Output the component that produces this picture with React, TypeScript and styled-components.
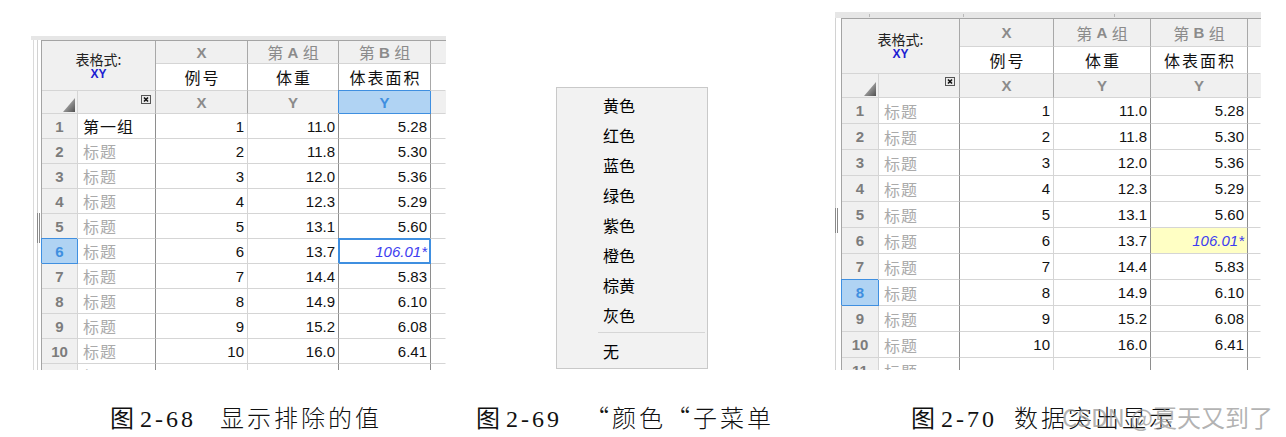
import React from "react";
import styled, { createGlobalStyle, css } from "styled-components";

const GlobalStyle = createGlobalStyle`
  html, body { margin: 0; padding: 0; background: #ffffff; }
  body { font-family: "Liberation Sans", "Noto Sans CJK SC", sans-serif; }
`;

const LINE_LIGHT = "#d5d5d5";
const LINE_DARK = "#8e8e8e";
const LINE_HEAD = "#a8a8a8";
const HEAD_BG = "#f0f0f0";
const BLUE = "#3f8fe0";
const SEL_BG = "#b0d3f3";
const HEAD_TEXT = "#8b8b8b";
const EXCL_TEXT = "#3d3df0";

const Page = styled.div`
  position: relative;
  width: 1286px;
  height: 437px;
  display: flex;
  overflow: hidden;
  background: #ffffff;
`;

const Figure = styled.section<{ $left: number; $width: number }>`
  flex: none;
  display: flex;
  flex-direction: column;
  margin-left: ${(p) => p.$left}px;
  width: ${(p) => p.$width}px;
`;

const Stage = styled.div<{ $top: number; $inset?: number }>`
  box-sizing: border-box;
  height: 372px;
  padding-top: ${(p) => p.$top}px;
  padding-left: ${(p) => p.$inset ?? 0}px;
  display: flex;
  flex-direction: column;
  align-items: flex-start;
`;

/* ---------- caption ---------- */
const Caption = styled.div<{ $indent: number; $gap: number }>`
  display: flex;
  align-items: baseline;
  gap: ${(p) => p.$gap}px;
  margin-top: 30px;
  margin-left: ${(p) => p.$indent}px;
  height: 30px;
  white-space: nowrap;
  color: #111;
`;

const CapLabel = styled.span`
  font-family: "Liberation Serif", "Noto Sans CJK SC", serif;
  font-size: 24px;
  line-height: 30px;
  letter-spacing: 3px;
  word-spacing: -6px;
`;

const CapTitle = styled.span`
  font-family: "Noto Sans CJK SC", sans-serif;
  font-weight: 300;
  font-size: 24px;
  line-height: 30px;
  letter-spacing: 3px;
`;

const Watermark = styled.div`
  position: absolute;
  left: 1062px;
  top: 402px;
  font-family: "Noto Sans CJK SC", sans-serif;
  font-size: 24px;
  line-height: 30px;
  color: rgba(150, 150, 150, 0.72);
  white-space: nowrap;
  pointer-events: none;
`;

/* ---------- sheet ---------- */
const Sheet = styled.div<{ $h: number }>`
  display: flex;
  flex-direction: column;
  height: ${(p) => p.$h}px;
  overflow: hidden;
`;

const Strip = styled.div<{ $h: number; $ticks: string }>`
  flex: none;
  height: ${(p) => p.$h}px;
  background: ${(p) => p.$ticks}#e6e6e6;
`;

const SheetBody = styled.div`
  display: flex;
  flex: 1;
  min-height: 0;
`;

const Gutter = styled.div<{ $w: number; $pad: number; $gap: number }>`
  flex: none;
  box-sizing: border-box;
  width: ${(p) => p.$w}px;
  padding-left: ${(p) => p.$pad}px;
  display: flex;
  gap: ${(p) => p.$gap}px;
`;

const Rail = styled.div`
  width: 1px;
  background: #dadada;
`;

const Track = styled.div`
  width: 3px;
  border-left: 1px solid #d2d2d2;
  display: flex;
  flex-direction: column;
`;

const Grip = styled.div<{ $top: number; $h: number }>`
  margin-left: -1px;
  margin-top: ${(p) => p.$top}px;
  width: 1px;
  height: ${(p) => p.$h}px;
  border-left: 1px solid #8a8a8a;
  border-right: 1px solid #8a8a8a;
`;

const Grid = styled.div<{ $cols: string; $rows: string; $rowH: number }>`
  flex: none;
  display: grid;
  grid-template-columns: ${(p) => p.$cols};
  grid-template-rows: ${(p) => p.$rows};
  grid-auto-rows: ${(p) => p.$rowH}px;
  align-content: start;
  border-top: 1px solid #a4a4a4;
  border-left: 1px solid #a4a4a4;
  font-family: "Liberation Sans", "Noto Sans CJK SC", sans-serif;
`;

type Lines = { $rc: string; $bc?: string };

const cellBase = css<Lines>`
  box-sizing: border-box;
  min-width: 0;
  overflow: hidden;
  white-space: nowrap;
  display: flex;
  align-items: center;
  border-right: 1px solid ${(p) => p.$rc};
  border-bottom: 1px solid ${(p) => p.$bc ?? LINE_LIGHT};
`;

const selectedFrame = css`
  background: ${SEL_BG};
  color: ${BLUE};
  border-right-color: ${BLUE};
  border-bottom-color: ${BLUE};
  box-shadow: -1px -1px 0 0 ${BLUE};
`;

const Corner = styled.div<Lines>`
  ${cellBase};
  grid-column: 1 / span 2;
  grid-row: 1 / span 2;
  flex-direction: column;
  justify-content: center;
  background: ${HEAD_BG};
  padding-bottom: 2px;
`;

const CornerLabel = styled.span`
  font-family: "Noto Sans CJK SC", sans-serif;
  font-size: 14px;
  line-height: 18px;
  color: #222;
`;

const CornerKind = styled.span`
  font-family: "Liberation Sans", sans-serif;
  font-weight: 700;
  font-size: 12px;
  line-height: 12px;
  color: #1c1cd2;
`;

const GroupCell = styled.div<Lines>`
  ${cellBase};
  justify-content: center;
  background: ${HEAD_BG};
  color: ${HEAD_TEXT};
  font-size: 16px;
  white-space: pre;
`;

const Letter = styled.span`
  font-family: "Liberation Sans", sans-serif;
  font-weight: 700;
  font-size: 15px;
`;

const NameCell = styled.div<Lines>`
  ${cellBase};
  justify-content: center;
  background: #ffffff;
  color: #111;
  font-family: "Noto Sans CJK SC", sans-serif;
  font-size: 16px;
  letter-spacing: 2px;
  padding-left: 2px;
`;

const KindCell = styled.div<Lines & { $active?: boolean }>`
  ${cellBase};
  justify-content: center;
  background: ${HEAD_BG};
  color: ${HEAD_TEXT};
  font-weight: 700;
  font-size: 15px;
  ${(p) => p.$active && selectedFrame};
`;

const SortCell = styled.div<Lines>`
  ${cellBase};
  background: ${HEAD_BG};
  justify-content: flex-end;
  align-items: flex-end;
  padding: 0 2px 1px 0;
`;

const ClearCell = styled.div<Lines & { $pad: number }>`
  ${cellBase};
  background: ${HEAD_BG};
  justify-content: flex-end;
  align-items: flex-start;
  padding: ${(p) => p.$pad}px 4px 0 0;
`;

const RowNum = styled.div<Lines & { $active?: boolean }>`
  ${cellBase};
  justify-content: center;
  background: ${HEAD_BG};
  color: #7c7c7c;
  font-weight: 700;
  font-size: 15px;
  ${(p) => p.$active && selectedFrame};
`;

const TitleCell = styled.div<Lines & { $muted?: boolean }>`
  ${cellBase};
  background: #ffffff;
  padding-left: 5px;
  font-family: "Noto Sans CJK SC", sans-serif;
  font-size: 16px;
  letter-spacing: 1px;
  color: ${(p) => (p.$muted ? "#aaaaaa" : "#111111")};
`;

const ValueCell = styled.div<Lines & { $mark?: "outline" | "fill" }>`
  ${cellBase};
  justify-content: flex-end;
  padding-right: 3px;
  background: #ffffff;
  color: #111;
  font-size: 15px;
  ${(p) =>
    p.$mark &&
    css`
      font-style: italic;
      color: ${EXCL_TEXT};
    `};
  ${(p) =>
    p.$mark === "outline" &&
    css`
      border-right-color: ${BLUE};
      border-bottom-color: ${BLUE};
      box-shadow: -1px -1px 0 0 ${BLUE}, inset 1px 1px 0 0 ${BLUE},
        inset -1px -1px 0 0 ${BLUE};
    `};
  ${(p) =>
    p.$mark === "fill" &&
    css`
      background: #ffffc4;
    `};
`;

/* ---------- small drawings ---------- */
function SortMark() {
  return (
    <svg width="12" height="14" viewBox="0 0 12 14">
      <defs>
        <linearGradient id="sortgrad" x1="0" y1="0" x2="1" y2="1">
          <stop offset="0" stopColor="#d8d8d8" />
          <stop offset="1" stopColor="#505050" />
        </linearGradient>
      </defs>
      <polygon points="12,0 12,14 0,14" fill="url(#sortgrad)" />
    </svg>
  );
}

function ClearBox() {
  return (
    <svg width="10" height="9" viewBox="0 0 10 9">
      <rect x="0.5" y="0.5" width="9" height="8" fill="#ececec" stroke="#555" />
      <path d="M3 2.5 L7 6.5 M7 2.5 L3 6.5" stroke="#111" strokeWidth="1.6" />
    </svg>
  );
}

/* ---------- data ---------- */
const A_VALUES = ["11.0", "11.8", "12.0", "12.3", "13.1", "13.7", "14.4", "14.9", "15.2", "16.0", ""];
const B_VALUES = ["5.28", "5.30", "5.36", "5.29", "5.60", "106.01*", "5.83", "6.10", "6.08", "6.41", ""];
const BODY_RIGHT = [LINE_LIGHT, LINE_DARK, LINE_LIGHT, LINE_DARK, LINE_DARK, "transparent"];

type SheetSpec = {
  cols: number[];
  head: [number, number, number];
  rowH: number;
  height: number;
  stripH: number;
  ticks: number[];
  gutterW: number;
  gutterPad: number;
  gutterGap: number;
  rail: boolean;
  gripTop: number;
  gripH: number;
  firstTitle?: string;
  selectedRow: number;
  selectY: boolean;
  mark: "outline" | "fill";
  clearPad: number;
};

const LEFT: SheetSpec = {
  cols: [36, 78, 92, 91, 92, 15],
  head: [23, 27, 23],
  rowH: 25,
  height: 334,
  stripH: 4,
  ticks: [],
  gutterW: 10,
  gutterPad: 2,
  gutterGap: 3,
  rail: true,
  gripTop: 173,
  gripH: 30,
  firstTitle: "第一组",
  selectedRow: 6,
  selectY: true,
  mark: "outline",
  clearPad: 4,
};

const RIGHT: SheetSpec = {
  cols: [37, 81, 94, 97, 97, 13],
  head: [28, 27, 24],
  rowH: 26,
  height: 358,
  stripH: 6,
  ticks: [34, 128, 279],
  gutterW: 6,
  gutterPad: 0,
  gutterGap: 0,
  rail: false,
  gripTop: 190,
  gripH: 25,
  selectedRow: 8,
  selectY: false,
  mark: "fill",
  clearPad: 3,
};

function tickBackground(ticks: number[]) {
  return ticks
    .map((x) => `linear-gradient(#b9b9b9, #b9b9b9) ${x}px 2px / 1px 3px no-repeat, `)
    .join("");
}

function DataSheet({ spec }: { spec: SheetSpec }) {
  const rows = Array.from({ length: 11 }, (_, i) => i);
  return (
    <Sheet $h={spec.height}>
      <Strip $h={spec.stripH} $ticks={tickBackground(spec.ticks)} />
      <SheetBody>
        <Gutter $w={spec.gutterW} $pad={spec.gutterPad} $gap={spec.gutterGap}>
          {spec.rail && <Rail />}
          <Track>
            <Grip $top={spec.gripTop} $h={spec.gripH} />
          </Track>
        </Gutter>
        <Grid
          $cols={spec.cols.map((c) => `${c}px`).join(" ")}
          $rows={spec.head.map((h) => `${h}px`).join(" ")}
          $rowH={spec.rowH}
        >
          <Corner $rc={LINE_HEAD}>
            <CornerLabel>表格式:</CornerLabel>
            <CornerKind>XY</CornerKind>
          </Corner>
          <GroupCell $rc={LINE_HEAD}>
            <Letter>X</Letter>
          </GroupCell>
          <GroupCell $rc={LINE_HEAD}>
            {"第 "}
            <Letter>A</Letter>
            {" 组"}
          </GroupCell>
          <GroupCell $rc={LINE_HEAD}>
            {"第 "}
            <Letter>B</Letter>
            {" 组"}
          </GroupCell>
          <GroupCell $rc="transparent" />

          <NameCell $rc={LINE_HEAD}>例号</NameCell>
          <NameCell $rc={LINE_HEAD}>体重</NameCell>
          <NameCell $rc={LINE_HEAD}>体表面积</NameCell>
          <NameCell $rc="transparent" />

          <SortCell $rc={LINE_LIGHT}>
            <SortMark />
          </SortCell>
          <ClearCell $rc={LINE_HEAD} $pad={spec.clearPad}>
            <ClearBox />
          </ClearCell>
          <KindCell $rc={LINE_HEAD}>X</KindCell>
          <KindCell $rc={LINE_HEAD}>Y</KindCell>
          <KindCell $rc={LINE_HEAD} $active={spec.selectY}>
            Y
          </KindCell>
          <KindCell $rc="transparent" />

          {rows.map((i) => (
            <React.Fragment key={i}>
              <RowNum $rc={BODY_RIGHT[0]} $active={i + 1 === spec.selectedRow}>
                {i + 1}
              </RowNum>
              <TitleCell $rc={BODY_RIGHT[1]} $muted={!(i === 0 && spec.firstTitle)}>
                {i === 0 && spec.firstTitle ? spec.firstTitle : "标题"}
              </TitleCell>
              <ValueCell $rc={BODY_RIGHT[2]}>{i < 10 ? i + 1 : ""}</ValueCell>
              <ValueCell $rc={BODY_RIGHT[3]}>{A_VALUES[i]}</ValueCell>
              <ValueCell $rc={BODY_RIGHT[4]} $mark={i === 5 ? spec.mark : undefined}>
                {B_VALUES[i]}
              </ValueCell>
              <ValueCell $rc={BODY_RIGHT[5]} />
            </React.Fragment>
          ))}
        </Grid>
      </SheetBody>
    </Sheet>
  );
}

/* ---------- menu ---------- */
const Menu = styled.ul`
  list-style: none;
  margin: 0;
  padding: 2px 0;
  width: 152px;
  box-sizing: border-box;
  border: 1px solid #c9c9c9;
  background: #f2f2f2;
  font-family: "Noto Sans CJK SC", sans-serif;
  font-size: 16px;
  color: #000;
`;

const MenuItem = styled.li`
  height: 30px;
  line-height: 30px;
  padding-left: 46px;
`;

const MenuSeparator = styled.li`
  height: 1px;
  margin: 2px 2px 3px 41px;
  background: #d6d6d6;
`;

const COLORS = ["黄色", "红色", "蓝色", "绿色", "紫色", "橙色", "棕黄", "灰色"];

export default function App() {
  return (
    <>
      <GlobalStyle />
      <Page>
        <Figure $left={31} $width={415}>
          <Stage $top={36}>
            <DataSheet spec={LEFT} />
          </Stage>
          <Caption $indent={79} $gap={24}>
            <CapLabel>图 2-68</CapLabel>
            <CapTitle>显示排除的值</CapTitle>
          </Caption>
        </Figure>

        <Figure $left={24} $width={320}>
          <Stage $top={87} $inset={86}>
            <Menu>
              {COLORS.map((c) => (
                <MenuItem key={c}>{c}</MenuItem>
              ))}
              <MenuSeparator />
              <MenuItem>无</MenuItem>
            </Menu>
          </Stage>
          <Caption $indent={6} $gap={23}>
            <CapLabel>图 2-69</CapLabel>
            <CapTitle>“颜色“子菜单</CapTitle>
          </Caption>
        </Figure>

        <Figure $left={45} $width={426}>
          <Stage $top={12}>
            <DataSheet spec={RIGHT} />
          </Stage>
          <Caption $indent={76} $gap={17}>
            <CapLabel>图 2-70</CapLabel>
            <CapTitle>数据突出显示</CapTitle>
          </Caption>
        </Figure>

        <Watermark>CSDN @夏天又到了</Watermark>
      </Page>
    </>
  );
}
